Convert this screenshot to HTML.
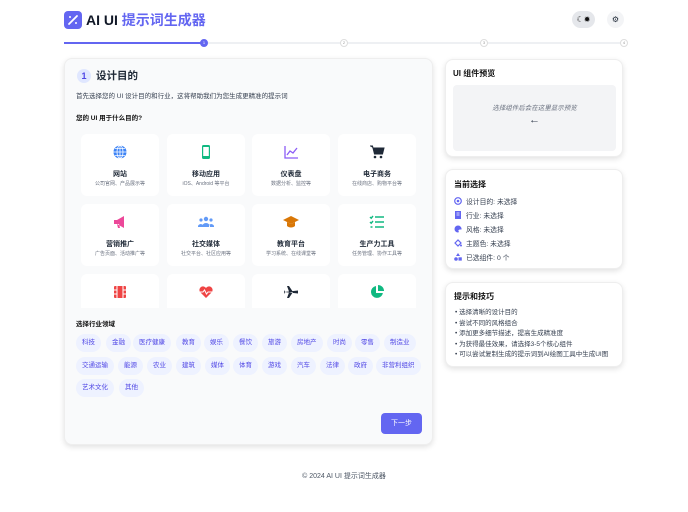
<!DOCTYPE html>
<html><head><meta charset="utf-8"><style>
*{box-sizing:border-box;margin:0;padding:0}
body{width:688px;height:512px;background:#fff;font-family:"Liberation Sans","Noto Sans CJK SC",sans-serif;color:#1f2937;position:relative;overflow:hidden}
.abs{position:absolute}
.logo{left:64px;top:11px;width:18px;height:18px;background:#6366f1;border-radius:4px}
.title{left:86px;top:10px;font-size:14px;font-weight:bold;line-height:20px;color:#111827}
.title span{color:#6366f1}
.tbtn{left:572px;top:11px;width:23px;height:17px;background:#e5e7eb;border-radius:9px;font-size:8px;text-align:center;line-height:17px;color:#111}
.sbtn{left:607px;top:11px;width:17px;height:17px;background:#f3f4f6;border-radius:9px;font-size:8px;text-align:center;line-height:17px}
.line{top:42px;height:2px;background:#eef0f3}
.dot{top:39px;width:8px;height:8px;border-radius:50%;background:#fff;border:1px solid #ddd;font-size:4px;text-align:center;line-height:6px;color:#999}
.card{background:#f9fafb;border-radius:8px;box-shadow:0 2px 6px rgba(0,0,0,.12);border:1px solid #eee}
.num{left:77px;top:69px;width:14px;height:14px;border-radius:50%;background:#e0e7ff;color:#4f46e5;font-size:9px;font-weight:bold;text-align:center;line-height:14px}
.h{left:96px;top:69px;font-size:10.5px;font-weight:bold;line-height:15px}
.t7{font-size:6.5px;line-height:9px;color:#374151}
.grid{left:81px;top:134px;width:336px;height:174px;overflow:hidden}
.g{position:absolute;width:78px;height:62px;background:#fff;border-radius:6px;text-align:center}
.g .ic{position:absolute;top:10px;left:31px;width:16px;height:16px}
.g b{position:absolute;top:36px;left:0;right:0;font-size:7px;line-height:9px;color:#1f2937}
.g i{position:absolute;top:47px;left:0;right:0;font-style:normal;font-size:5px;line-height:7px;color:#6b7280}
.tag{position:absolute;height:18px;border-radius:9px;background:#eef2ff;color:#4f46e5;font-size:6.5px;line-height:18px;padding:0 6px}
.btn{left:381px;top:413px;width:41px;height:21px;background:#6366f1;border-radius:4px;color:#fff;font-size:7px;line-height:21px;text-align:center}
.rc{left:445px;width:178px;background:#fff}
.rh{font-size:8px;font-weight:bold;line-height:10px;color:#111}
.row{font-size:6.8px;line-height:9px;color:#374151;position:absolute;left:8px}
.row svg{display:inline-block;width:8px;height:8px;vertical-align:-1px;margin-right:4px}
li{font-size:6.5px;line-height:10.5px;color:#374151;list-style:none}
</style></head><body>
<div class="abs logo"><svg width="18" height="18" viewBox="0 0 18 18"><path d="M5 13L13 5" stroke="#fff" stroke-width="1.8" stroke-linecap="round"/><circle cx="6" cy="6" r="1" fill="#fff"/><circle cx="12" cy="12" r="1" fill="#fff"/></svg></div>
<div class="abs title">AI UI <span>提示词生成器</span></div>
<div class="abs tbtn">☾✹</div>
<div class="abs sbtn">⚙</div>
<div class="abs line" style="left:64px;width:560px"></div>
<div class="abs line" style="left:64px;width:140px;background:#6366f1"></div>
<div class="abs dot" style="left:200px;background:#6366f1;border-color:#6366f1;color:#fff">1</div>
<div class="abs dot" style="left:340px">2</div>
<div class="abs dot" style="left:480px">3</div>
<div class="abs dot" style="left:620px">4</div>

<div class="abs card" style="left:64px;top:58px;width:369px;height:387px"></div>
<div class="abs num">1</div>
<div class="abs h">设计目的</div>
<div class="abs t7" style="left:76px;top:92px">首先选择您的 UI 设计目的和行业，这将帮助我们为您生成更精准的提示词</div>
<div class="abs t7" style="left:76px;top:114px;font-weight:bold;color:#111">您的 UI 用于什么目的?</div>
<div class="abs grid">
<div class="g" style="left:0;top:0"><svg class="ic" viewBox="0 0 16 16"><circle cx="8" cy="8" r="6.5" fill="#3b82f6"/><path d="M1.5 8h13M8 1.5v13M3 4.5h10M3 11.5h10" stroke="#fff" stroke-width=".8"/><ellipse cx="8" cy="8" rx="3" ry="6.5" fill="none" stroke="#fff" stroke-width=".8"/></svg><b>网站</b><i>公司官网、产品展示等</i></div>
<div class="g" style="left:86px;top:0"><svg class="ic" viewBox="0 0 16 16"><rect x="4" y="1" width="8" height="14" rx="1.5" fill="#10b981"/><rect x="5.2" y="3" width="5.6" height="9" fill="#fff"/></svg><b>移动应用</b><i>iOS、Android 等平台</i></div>
<div class="g" style="left:171px;top:0"><svg class="ic" viewBox="0 0 16 16"><path d="M2 2v12h13M4 11l3-4 3 2 4-5" stroke="#8b5cf6" stroke-width="1.3" fill="none"/></svg><b>仪表盘</b><i>数据分析、监控等</i></div>
<div class="g" style="left:257px;top:0"><svg class="ic" viewBox="0 0 16 16"><path d="M1 2h2.5l2 8h8l1.5-6H4" fill="#1f2937" stroke="#1f2937" stroke-width="1"/><circle cx="6" cy="13" r="1.3" fill="#1f2937"/><circle cx="12" cy="13" r="1.3" fill="#1f2937"/></svg><b>电子商务</b><i>在线商店、购物平台等</i></div>
<div class="g" style="left:0;top:70px"><svg class="ic" viewBox="0 0 16 16"><path d="M2 6h3l7-4v12l-7-4H2zM5 10l1 4h2l-1-4" fill="#ec4899"/></svg><b>营销推广</b><i>广告页面、活动推广等</i></div>
<div class="g" style="left:86px;top:70px"><svg class="ic" viewBox="0 0 16 16" fill="#3b82f6" opacity=".8"><circle cx="8" cy="5" r="2.2"/><circle cx="3" cy="6" r="1.6"/><circle cx="13" cy="6" r="1.6"/><path d="M4 13a4 4 0 018 0zM0 12a3 3 0 015-1v2H0zM16 12a3 3 0 00-5-1v2h5z"/></svg><b>社交媒体</b><i>社交平台、社区应用等</i></div>
<div class="g" style="left:171px;top:70px"><svg class="ic" viewBox="0 0 16 16" fill="#d97706"><path d="M0 6l8-4 8 4-8 4z"/><path d="M4 8v4c2 2 6 2 8 0V8l-4 2z"/></svg><b>教育平台</b><i>学习系统、在线课堂等</i></div>
<div class="g" style="left:257px;top:70px"><svg class="ic" viewBox="0 0 16 16" stroke="#10b981" stroke-width="1.4" fill="none"><path d="M1 3l1.2 1.2L4 2M1 8l1.2 1.2L4 7M1.5 13h2M6 3h9M6 8h9M6 13h9"/></svg><b>生产力工具</b><i>任务管理、协作工具等</i></div>
<div class="g" style="left:0;top:140px"><svg class="ic" viewBox="0 0 16 16"><rect x="2" y="2" width="12" height="12" rx="1" fill="#ef4444"/><path d="M5 2v12M11 2v12M2 6h3M2 10h3M11 6h3M11 10h3" stroke="#fff"/></svg></div>
<div class="g" style="left:86px;top:140px"><svg class="ic" viewBox="0 0 16 16"><path d="M8 14L2 8a3.5 3.5 0 016-4 3.5 3.5 0 016 4z" fill="#ef4444"/><path d="M2 8h3l1.5-2 2 4 1.5-2h4" stroke="#fff" fill="none" stroke-width="1"/></svg></div>
<div class="g" style="left:171px;top:140px"><svg class="ic" viewBox="0 0 16 16" fill="#1f2937"><path d="M1 8l14-1.5v3zM6 7.5L4 2h2l4 6zM6 8.5L4 14h2l4-6zM1 6l1 2-1 2z"/></svg></div>
<div class="g" style="left:257px;top:140px"><svg class="ic" viewBox="0 0 16 16"><path d="M7 2a6 6 0 106.9 7H7z" fill="#10b981"/><path d="M9 1v6h6a6 6 0 00-6-6z" fill="#10b981"/></svg></div>
</div>
<div class="abs t7" style="left:76px;top:320px;font-weight:bold;color:#111">选择行业领域</div>
<div class="abs" style="left:76px;top:334px;width:350px;height:70px">
<div class="tag" style="left:0;top:0">科技</div><div class="tag" style="left:30px;top:0">金融</div><div class="tag" style="left:57px;top:0">医疗健康</div><div class="tag" style="left:100px;top:0">教育</div><div class="tag" style="left:128px;top:0">娱乐</div><div class="tag" style="left:157px;top:0">餐饮</div><div class="tag" style="left:186px;top:0">旅游</div><div class="tag" style="left:215px;top:0">房地产</div><div class="tag" style="left:251px;top:0">时尚</div><div class="tag" style="left:279px;top:0">零售</div><div class="tag" style="left:308px;top:0">制造业</div>
<div class="tag" style="left:0;top:23px">交通运输</div><div class="tag" style="left:42px;top:23px">能源</div><div class="tag" style="left:71px;top:23px">农业</div><div class="tag" style="left:100px;top:23px">建筑</div><div class="tag" style="left:129px;top:23px">媒体</div><div class="tag" style="left:157px;top:23px">体育</div><div class="tag" style="left:186px;top:23px">游戏</div><div class="tag" style="left:215px;top:23px">汽车</div><div class="tag" style="left:244px;top:23px">法律</div><div class="tag" style="left:272px;top:23px">政府</div><div class="tag" style="left:300px;top:23px">非营利组织</div>
<div class="tag" style="left:0;top:45px">艺术文化</div><div class="tag" style="left:43px;top:45px">其他</div>
</div>
<div class="abs btn">下一步</div>

<div class="abs card rc" style="top:59px;height:98px">
<div class="rh" style="position:absolute;left:7px;top:9px">UI 组件预览</div>
<div style="position:absolute;left:7px;top:25px;width:163px;height:66px;background:#f3f4f6;border-radius:4px;text-align:center">
<div style="font-size:6.5px;font-style:italic;color:#6b7280;margin-top:17px">选择组件后会在这里显示预览</div>
<div style="font-size:11px;color:#374151;margin-top:2px">←</div></div>
</div>
<div class="abs card rc" style="top:169px;height:100px">
<div class="rh" style="position:absolute;left:8px;top:10px">当前选择</div>
<div class="row" style="top:27px"><svg viewBox="0 0 8 8"><circle cx="4" cy="4" r="3.3" fill="none" stroke="#6366f1" stroke-width="1.2"/><circle cx="4" cy="4" r="1.3" fill="#6366f1"/></svg>设计目的: 未选择</div>
<div class="row" style="top:41px"><svg viewBox="0 0 8 8"><path d="M1 0h6v8H1z" fill="#6366f1"/><path d="M2.5 2h3M2.5 4h3" stroke="#fff" stroke-width=".8"/></svg>行业: 未选择</div>
<div class="row" style="top:55px"><svg viewBox="0 0 8 8"><path d="M4 .5a3.5 3.5 0 100 7c1 0 1-1 .5-1.5S5 4.5 6 4.5h1.5A3.5 3.5 0 004 .5z" fill="#6366f1"/></svg>风格: 未选择</div>
<div class="row" style="top:69px"><svg viewBox="0 0 8 8"><path d="M1 4l3-3 3 3-3 3z" fill="none" stroke="#6366f1" stroke-width="1.2"/><circle cx="7" cy="6.5" r="1" fill="#6366f1"/></svg>主题色: 未选择</div>
<div class="row" style="top:83px"><svg viewBox="0 0 8 8" fill="#6366f1"><path d="M4 0l2 3H2z"/><circle cx="2" cy="6" r="1.8"/><rect x="4.5" y="4.3" width="3.3" height="3.3"/></svg>已选组件: 0 个</div>
</div>
<div class="abs card rc" style="top:282px;height:85px">
<div class="rh" style="position:absolute;left:8px;top:9px">提示和技巧</div>
<ul style="position:absolute;left:9px;top:25px">
<li>• 选择清晰的设计目的</li><li>• 尝试不同的风格组合</li><li>• 添加更多细节描述，提高生成精准度</li><li>• 为获得最佳效果，请选择3-5个核心组件</li><li>• 可以尝试复制生成的提示词到AI绘图工具中生成UI图</li>
</ul></div>
<div class="abs" style="left:0;width:688px;top:471px;text-align:center;font-size:7px;color:#4b5563">© 2024 AI UI 提示词生成器</div>
</body></html>
